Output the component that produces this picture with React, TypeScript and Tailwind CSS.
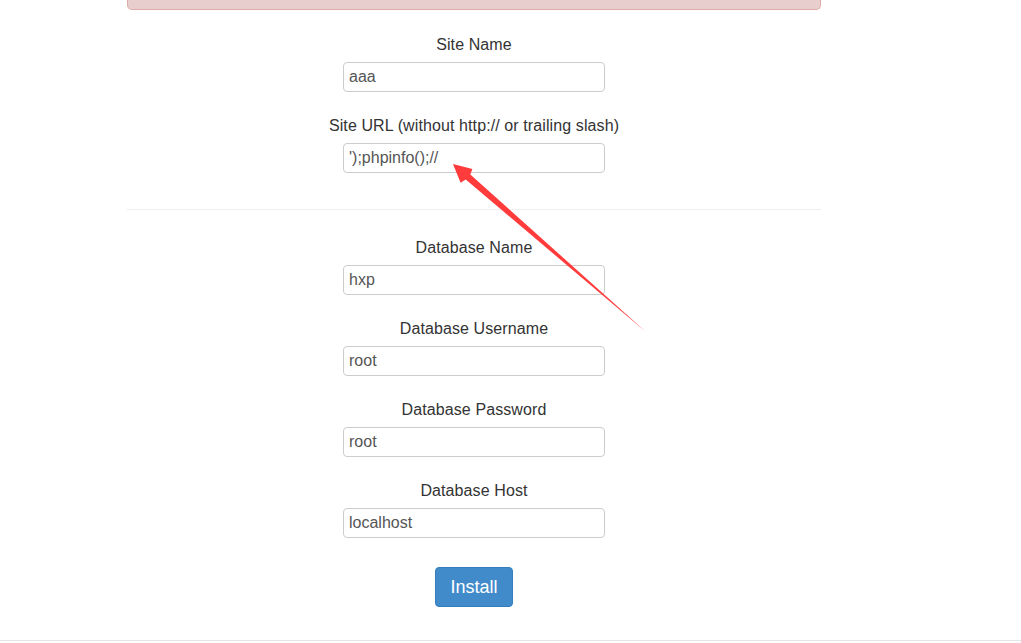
const fields1 = [
  { label: "Site Name", value: "aaa" },
  { label: "Site URL (without http:// or trailing slash)", value: "');phpinfo();//" },
];

const fields2 = [
  { label: "Database Name", value: "hxp" },
  { label: "Database Username", value: "root" },
  { label: "Database Password", value: "root" },
  { label: "Database Host", value: "localhost" },
];

function Field({ label, value }: { label: string; value: string }) {
  return (
    <div className="flex flex-col items-center">
      <label className="mb-[6px] h-[23px] text-[16px] leading-[24px] tracking-[0.1px] text-[#333]">{label}</label>
      <input
        readOnly
        value={value}
        className="h-[30px] w-[262px] rounded-[4px] border border-[#ccc] bg-white px-[5px] text-[16px] text-[#555] outline-none"
      />
    </div>
  );
}

export default function App() {
  return (
    <div className="relative h-[643px] w-full overflow-hidden bg-white font-['Liberation_Sans',Arial,sans-serif]">
      <div className="ml-[127px] w-[694px]">
        {/* Alert (scrolled mostly off screen) */}
        <div className="h-[10px] rounded-b-[5px] border-x border-b border-[#dfaaaa] bg-[#e8cfcd]" />

        <div className="mt-[23px] flex flex-col gap-[22px]">
          {fields1.map((f) => (
            <Field key={f.label} {...f} />
          ))}
        </div>

        <hr className="mt-[36px] border-t border-[#eee]" />

        <div className="mt-[26px] flex flex-col gap-[22px]">
          {fields2.map((f) => (
            <Field key={f.label} {...f} />
          ))}
        </div>

        <div className="mt-[29px] flex justify-center">
          <button
            type="button"
            className="h-[40px] w-[78px] rounded-[4px] border border-[#357ebd] bg-[#428bca] text-[18px] text-white"
          >
            Install
          </button>
        </div>
      </div>

      <div className="mt-[33px] border-t border-[#e5e5e5]" />

      {/* Red annotation arrow */}
      <svg className="pointer-events-none absolute left-0 top-0" width="1021" height="643">
        <polygon
          points="453,164 472.4,169.1 470.3,174.4 646,332 465.7,179.6 460.6,182.7"
          fill="#ff3b3b"
        />
      </svg>
    </div>
  );
}
